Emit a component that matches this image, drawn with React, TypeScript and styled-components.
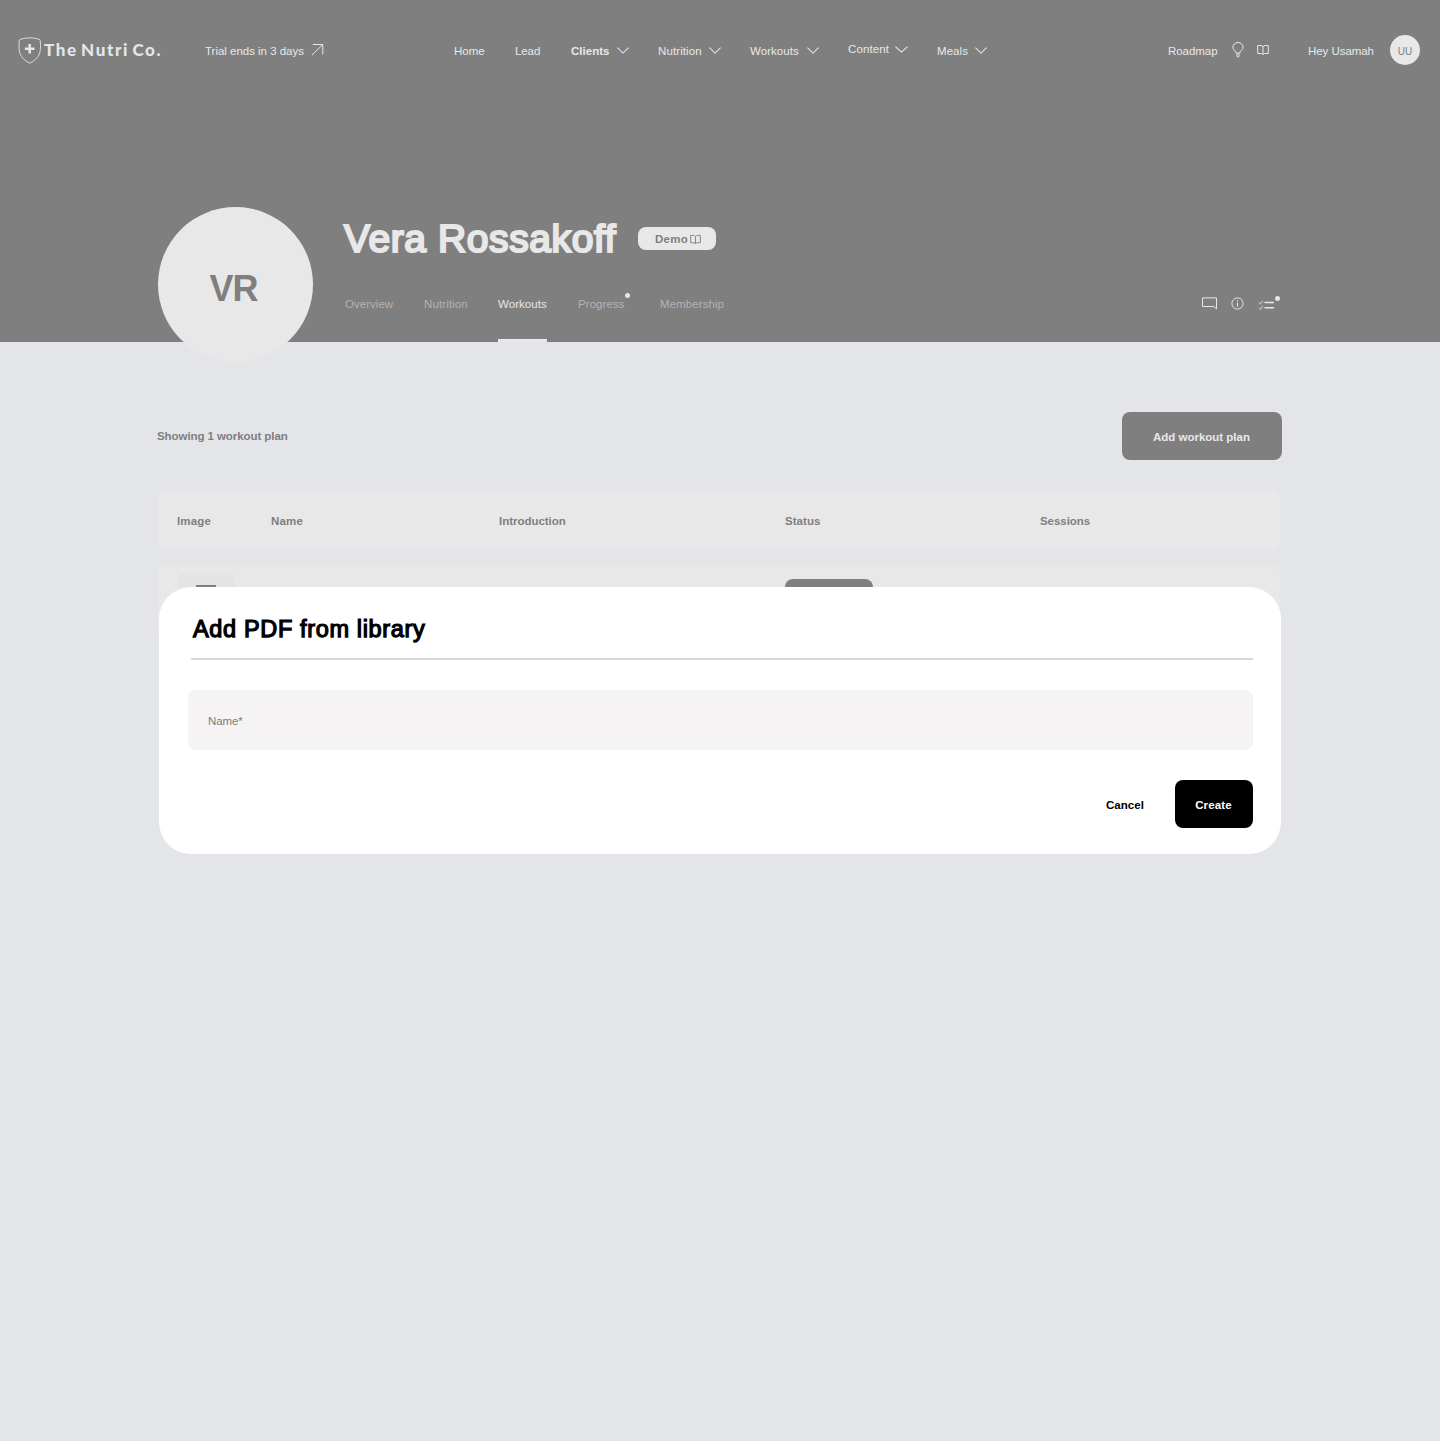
import React from 'react';
import styled, { createGlobalStyle } from 'styled-components';

const GREY = '#7f7f7f';
const LIGHT = '#e8e8e8';

const GlobalStyle = createGlobalStyle`
  * { box-sizing: border-box; }
  body {
    margin: 0;
    background: #e4e5e9;
    font-family: 'Liberation Sans', Arial, Helvetica, sans-serif;
    font-size: 11.5px;
    line-height: 16px;
  }
  button { font: inherit; border: 0; padding: 0; cursor: pointer; }
`;

const Page = styled.div`
  position: relative;
  width: 1440px;
  height: 1441px;
  overflow: hidden;
`;

const Hero = styled.header`
  height: 342px;
  background: ${GREY};
  color: ${LIGHT};
`;

const Text = styled.span<{ $ls?: number; $bold?: boolean }>`
  white-space: nowrap;
  letter-spacing: ${p => p.$ls ?? 0}px;
  font-weight: ${p => (p.$bold ? 700 : 400)};
`;

const TopBar = styled.div`
  display: flex;
  height: 102px;
  padding: 0 20px 0 18px;
  align-items: center;
`;

const Brand = styled.div`
  display: flex;
  align-items: center;
  width: 187px;
  gap: 3px;
  svg { margin-top: -1px; }
`;

const BrandName = styled.span`
  font-family: Lato, sans-serif;
  font-weight: 900;
  font-size: 17px;
  line-height: 20px;
  letter-spacing: 1.6px;
  word-spacing: -2.2px;
  white-space: nowrap;
  color: #e4e5e9;
  margin-top: -2px;
`;

const Trial = styled.div`
  display: flex;
  align-items: center;
  justify-content: space-between;
  width: 119px;
  svg { margin-top: -3px; }
`;

const Nav = styled.nav`
  display: flex;
  align-items: center;
  margin-left: 130px;
`;

const NavItem = styled.a<{ $width: number; $raised?: boolean }>`
  display: flex;
  align-items: center;
  width: ${p => p.$width}px;
  margin-bottom: ${p => (p.$raised ? 4 : 0)}px;
  svg { margin-top: ${p => (p.$raised ? 0 : -2)}px; }
`;

const NavText = styled(Text)<{ $slot?: number }>`
  width: ${p => (p.$slot ? `${p.$slot}px` : 'auto')};
`;

const Tools = styled.div`
  display: flex;
  align-items: center;
  margin-left: auto;
  svg { margin-top: -2px; }
`;

const ToolSlot = styled.div<{ $width: number }>`
  display: flex;
  align-items: center;
  width: ${p => p.$width}px;
`;

const UserBadge = styled.div`
  display: flex;
  align-items: center;
  justify-content: center;
  width: 30px;
  height: 30px;
  margin-top: -2px;
  padding-top: 4px;
  border-radius: 50%;
  background: ${LIGHT};
  color: ${GREY};
  font-size: 10px;
`;

const Profile = styled.div`
  display: flex;
  height: 240px;
  padding: 105px 160px 0 158px;
`;

const Avatar = styled.div`
  flex: none;
  display: flex;
  align-items: center;
  justify-content: center;
  width: 155px;
  height: 155px;
  padding: 9px 4px 0 0;
  border-radius: 50%;
  background: ${LIGHT};
  color: ${GREY};
  font-size: 36px;
  font-weight: 700;
  letter-spacing: -1px;
`;

const ProfileBody = styled.div`
  display: flex;
  flex-direction: column;
  flex: 1;
  margin-left: 31px;
  height: 135px;
`;

const NameRow = styled.div`
  display: flex;
  align-items: center;
  height: 62px;
`;

const ClientName = styled.h1`
  margin: 0;
  width: 294px;
  padding-top: 1px;
  font-size: 39px;
  font-weight: 400;
  line-height: 46px;
  letter-spacing: 0.6px;
  -webkit-text-stroke: 2.2px ${LIGHT};
  white-space: nowrap;
`;

const DemoTag = styled.div`
  display: flex;
  align-items: center;
  width: 78px;
  height: 23px;
  padding: 2px 0 0 17px;
  gap: 2px;
  border-radius: 8px;
  background: ${LIGHT};
  color: ${GREY};
  svg { margin-top: 1px; }
`;

const TabRow = styled.div`
  display: flex;
  flex: 1;
  align-items: flex-end;
  padding-left: 1px;
`;

const Tab = styled.a<{ $width: number; $active?: boolean }>`
  position: relative;
  height: 46px;
  width: ${p => p.$width}px;
  margin-right: 31px;
  border-bottom: 3px solid ${p => (p.$active ? LIGHT : 'transparent')};
  color: ${p => (p.$active ? LIGHT : '#b3b3b3')};
  white-space: nowrap;
`;

const Dot = styled.i<{ $top: number; $right: number }>`
  position: absolute;
  top: ${p => p.$top}px;
  right: ${p => p.$right}px;
  width: 5px;
  height: 5px;
  border-radius: 50%;
  background: #e4e5e9;
`;

const TabTools = styled.div`
  display: flex;
  align-items: center;
  gap: 14px;
  height: 46px;
  padding-bottom: 32px;
  margin-left: auto;
`;

const Checklist = styled.div`
  position: relative;
  display: flex;
  width: 22px;
`;

const Content = styled.main`
  width: 1125px;
  margin: 70px 0 0 157px;
`;

const PlansHead = styled.div`
  display: flex;
  align-items: center;
  justify-content: space-between;
  color: ${GREY};
`;

const AddButton = styled.button`
  width: 160px;
  height: 48px;
  padding: 1px 1px 0 0;
  border-radius: 8px;
  background: ${GREY};
  color: ${LIGHT};
`;

const TableRow = styled.div<{ $height: number; $gap: number }>`
  display: grid;
  grid-template-columns: 94px 228px 286px 255px 1fr;
  align-items: ${p => (p.$height > 60 ? 'start' : 'center')};
  width: 1122px;
  height: ${p => p.$height}px;
  margin: ${p => p.$gap}px 0 0 1px;
  padding: ${p => (p.$height > 60 ? '8px 19px' : '2px 19px 0')};
  border-radius: 8px;
  background: ${LIGHT};
  color: ${GREY};
`;

const Thumb = styled.div`
  display: flex;
  justify-content: center;
  width: 58px;
  height: 58px;
  padding-top: 12px;
  border-radius: 8px;
  background: #e4e4e4;
`;

const StatusPill = styled.div`
  grid-column: 4;
  width: 88px;
  height: 36px;
  margin-top: 6px;
  border-radius: 8px;
  background: ${GREY};
`;

const Dialog = styled.section`
  position: absolute;
  top: 587px;
  left: 159px;
  width: 1122px;
  height: 267px;
  padding: 26px 28px 26px 29px;
  border-radius: 32px;
  background: #fff;
  color: #000;
`;

const DialogHead = styled.div`
  height: 47px;
  margin-left: 3px;
  border-bottom: 2px solid #d9d9d9;
`;

const DialogTitle = styled.h2`
  margin: 0;
  padding-left: 2px;
  font-size: 23.5px;
  font-weight: 400;
  line-height: 32px;
  letter-spacing: 0.65px;
  -webkit-text-stroke: 1.25px #000;
`;

const Field = styled.label`
  display: flex;
  align-items: center;
  height: 60px;
  margin-top: 30px;
  padding: 2px 20px 0 20px;
  border-radius: 8px;
  background: #f5f3f4;
  color: #7d7b7c;
`;

const Actions = styled.div`
  display: flex;
  justify-content: flex-end;
  gap: 11px;
  margin-top: 30px;
`;

const Action = styled.button<{ $primary?: boolean }>`
  width: 78px;
  height: 48px;
  padding: 1px ${p => (p.$primary ? 1 : 0)}px 0 0;
  border-radius: 8px;
  background: ${p => (p.$primary ? '#000' : 'transparent')};
  color: ${p => (p.$primary ? '#fff' : '#000')};
`;

const Chevron = ({ size = 12 }: { size?: number }) => (
  <svg width={size} height="7" viewBox="0 0 12 7" preserveAspectRatio="none" fill="none" stroke="currentColor" strokeWidth="1.05">
    <path d="M.4.7 6 6.1 11.6.7" />
  </svg>
);

const Shield = () => (
  <svg width="23" height="27" viewBox="0 0 23 27" fill="none" stroke="#e4e5e9">
    <path d="M11.800.9C8.500.9 5.100 1.400 2 2.500Q1.400 2.700 1.300 3.400C.5 10.700 1 17 4.600 20.900c2 2.200 4.500 4 7.200 5.200 2.700-1.200 5.200-3 7.200-5.200 3.500-3.900 4-10.200 3.200-17.500q-.1-.7-.7-.9C18.500 1.400 15.100.9 11.800.9z" strokeWidth=".9" />
    <path d="M11.700 7v9.600M6.900 11.800h9.600" strokeWidth="2.600" />
  </svg>
);

const Book = ({ size = 12 }: { size?: number }) => (
  <svg width={size} height={size} viewBox="0 0 12 12" fill="none" stroke="currentColor" strokeWidth="1" strokeLinejoin="round">
    <path d="M6 2.700C5.400 1.900 4.700 1.500 3.900 1.500H.7v8h3.400c.9 0 1.500.3 1.900 1.200.4-.9 1-1.200 1.900-1.200h3.400v-8H8.100C7.300 1.500 6.600 1.900 6 2.700zM6 2.700v8" />
  </svg>
);

const navItems = [
  { label: 'Home', width: 61, ls: 0.02 },
  { label: 'Lead', width: 56, ls: -0.1 },
  { label: 'Clients', width: 87, ls: 0.02, slot: 46, bold: true },
  { label: 'Nutrition', width: 92, ls: 0.1, slot: 51 },
  { label: 'Workouts', width: 98, ls: 0.05, slot: 57 },
  { label: 'Content', width: 89, ls: 0.1, slot: 47, raised: true },
  { label: 'Meals', width: 52, ls: 0.07, slot: 38 },
];

const tabs = [
  { label: 'Overview', width: 48, ls: 0.03 },
  { label: 'Nutrition', width: 43, ls: 0.1 },
  { label: 'Workouts', width: 49, ls: 0.05, active: true },
  { label: 'Progress', width: 51, ls: 0.07, dot: true },
  { label: 'Membership', width: 65, ls: 0.08 },
];

const columns = [
  { label: 'Image', ls: 0.14 },
  { label: 'Name', ls: 0.2 },
  { label: 'Introduction', ls: -0.03 },
  { label: 'Status', ls: 0.05 },
  { label: 'Sessions', ls: -0.05 },
];

export default function App() {
  return (
    <Page>
      <GlobalStyle />
      <Hero>
        <TopBar>
          <Brand>
            <Shield />
            <BrandName>The Nutri Co.</BrandName>
          </Brand>
          <Trial>
            <Text $ls={-0.02}>Trial ends in 3 days</Text>
            <svg width="13" height="13" viewBox="0 0 13 13" fill="none" stroke="currentColor" strokeWidth="1">
              <path d="M1.800 1.500h10v10M11.800 1.500.8 12.300" />
            </svg>
          </Trial>
          <Nav>
            {navItems.map(n => (
              <NavItem key={n.label} $width={n.width} $raised={n.raised}>
                <NavText $ls={n.ls} $bold={n.bold} $slot={n.slot}>{n.label}</NavText>
                {n.slot && <Chevron size={n.raised ? 13 : 12} />}
              </NavItem>
            ))}
          </Nav>
          <Tools>
            <ToolSlot $width={64}><Text $ls={-0.05}>Roadmap</Text></ToolSlot>
            <ToolSlot $width={25}>
              <svg width="12" height="16" viewBox="0 0 12 16" fill="none" stroke="currentColor" strokeWidth="1">
                <path d="M4 11.200V9.800C2.400 8.400.9 7 .9 5.100a5.100 4.600 0 0 1 10.200 0c0 1.900-1.500 3.300-3.100 4.700v1.400zM4 13h4M4.700 14.700h2.600" />
              </svg>
            </ToolSlot>
            <ToolSlot $width={51}><Book /></ToolSlot>
            <ToolSlot $width={82}><Text $ls={-0.05}>Hey Usamah</Text></ToolSlot>
            <UserBadge>UU</UserBadge>
          </Tools>
        </TopBar>
        <Profile>
          <Avatar>VR</Avatar>
          <ProfileBody>
            <NameRow>
              <ClientName>Vera Rossakoff</ClientName>
              <DemoTag><Text $bold $ls={0.3}>Demo</Text><Book size={11} /></DemoTag>
            </NameRow>
            <TabRow>
              {tabs.map(t => (
                <Tab key={t.label} $width={t.width} $active={t.active}>
                  <Text $ls={t.ls}>{t.label}</Text>
                  {t.dot && <Dot $top={-3} $right={-1} />}
                </Tab>
              ))}
              <TabTools>
                <svg width="15" height="13" viewBox="0 0 15 13" fill="none" stroke="currentColor" strokeWidth="1">
                  <path d="M.5.9h14v11L11.700 9.500H.5z" />
                </svg>
                <svg width="13" height="13" viewBox="0 0 13 13" fill="none" stroke="currentColor" strokeWidth="1">
                  <circle cx="6.500" cy="6.500" r="5.600" />
                  <path d="M6.500 5.700v4M6.500 3.300v1.200" />
                </svg>
                <Checklist>
                  <svg width="17" height="13" viewBox="0 0 17 13" fill="none" stroke="currentColor">
                    <path d="M6.500 5.500H16M6.500 10.800H16" strokeWidth="1.500" />
                    <path d="m1 5.500 1.300 1.300L5 3.900M1 10.800l1.300 1.300L5 9.200" strokeWidth="1.200" opacity=".6" />
                  </svg>
                  <Dot $top={-1} $right={0} />
                </Checklist>
              </TabTools>
            </TabRow>
          </ProfileBody>
        </Profile>
      </Hero>
      <Content>
        <PlansHead>
          <Text $bold $ls={-0.07}>Showing 1 workout plan</Text>
          <AddButton><Text $bold $ls={-0.01}>Add workout plan</Text></AddButton>
        </PlansHead>
        <TableRow $height={60} $gap={30}>
          {columns.map(c => <Text key={c.label} $bold $ls={c.ls}>{c.label}</Text>)}
        </TableRow>
        <TableRow $height={74} $gap={15}>
          <Thumb>
            <svg width="20" height="24" viewBox="0 0 20 24" fill="none" stroke={GREY} strokeWidth="2">
              <path d="M1 1h18v22H1z" />
            </svg>
          </Thumb>
          <StatusPill />
        </TableRow>
      </Content>
      <Dialog>
        <DialogHead><DialogTitle>Add PDF from library</DialogTitle></DialogHead>
        <Field><Text $ls={-0.1}>Name*</Text></Field>
        <Actions>
          <Action><Text $bold $ls={0.07}>Cancel</Text></Action>
          <Action $primary><Text $bold $ls={0.15}>Create</Text></Action>
        </Actions>
      </Dialog>
    </Page>
  );
}
